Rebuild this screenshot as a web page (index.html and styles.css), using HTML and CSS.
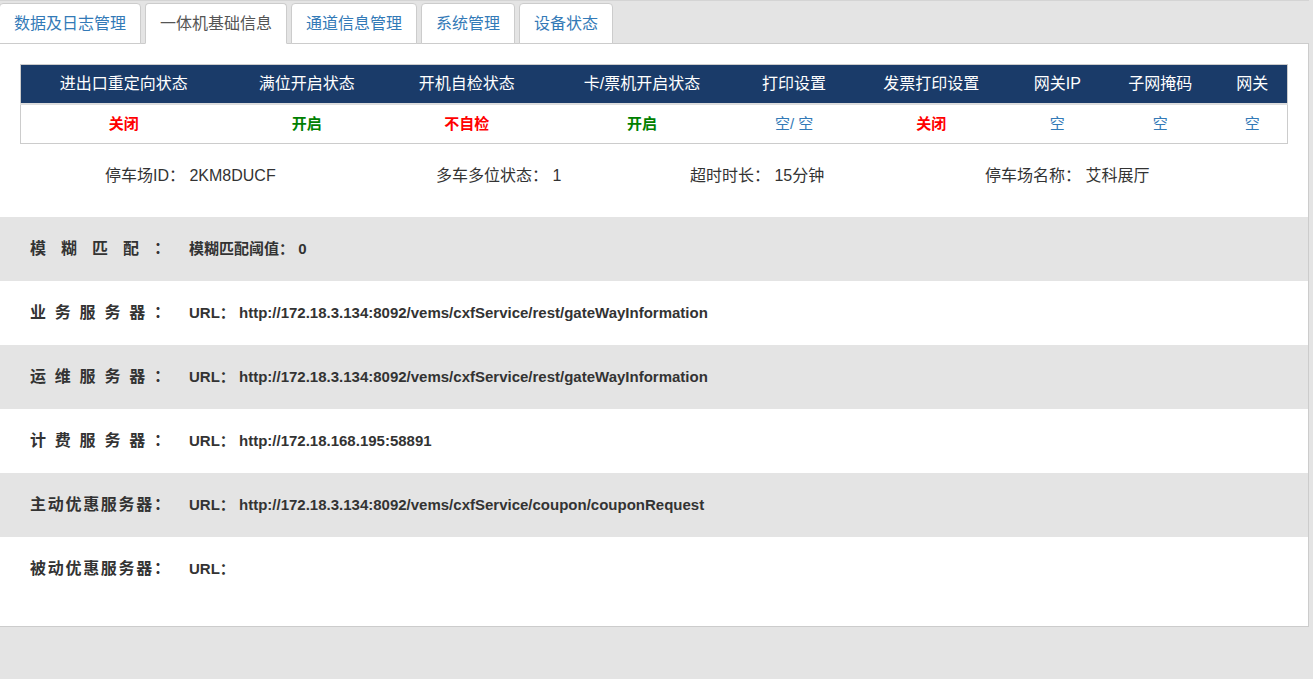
FILE: index.html
```html
<!DOCTYPE html>
<html lang="zh-CN">
<head>
<meta charset="utf-8">
<title>一体机基础信息</title>
<link rel="stylesheet" href="styles.css">
</head>
<body>
<div class="page">
  <ul class="tabs">
    <li class="tab">数据及日志管理</li>
    <li class="tab active">一体机基础信息</li>
    <li class="tab">通道信息管理</li>
    <li class="tab">系统管理</li>
    <li class="tab">设备状态</li>
  </ul>
  <div class="panel">
    <div class="table-wrap">
      <table class="status">
        <colgroup>
          <col class="c1"><col class="c2"><col class="c3"><col class="c4"><col class="c5"><col class="c6"><col class="c7"><col class="c8"><col class="c9">
        </colgroup>
        <thead>
          <tr>
            <th>进出口重定向状态</th>
            <th>满位开启状态</th>
            <th>开机自检状态</th>
            <th>卡/票机开启状态</th>
            <th>打印设置</th>
            <th>发票打印设置</th>
            <th>网关IP</th>
            <th>子网掩码</th>
            <th>网关</th>
          </tr>
        </thead>
        <tbody>
          <tr>
            <td class="red">关闭</td>
            <td class="green">开启</td>
            <td class="red">不自检</td>
            <td class="green">开启</td>
            <td class="blue">空/ 空</td>
            <td class="red">关闭</td>
            <td class="blue">空</td>
            <td class="blue">空</td>
            <td class="blue">空</td>
          </tr>
        </tbody>
      </table>
    </div>
    <div class="info">
      <span>停车场ID： 2KM8DUCF</span>
      <span>多车多位状态： 1</span>
      <span>超时时长： 15分钟</span>
      <span>停车场名称： 艾科展厅</span>
    </div>
    <div class="rows">
      <div class="row gray"><span class="label">模糊匹配：</span><span class="value">模糊匹配阈值： 0</span></div>
      <div class="row"><span class="label">业务服务器：</span><span class="value">URL： http://172.18.3.134:8092/vems/cxfService/rest/gateWayInformation</span></div>
      <div class="row gray"><span class="label">运维服务器：</span><span class="value">URL： http://172.18.3.134:8092/vems/cxfService/rest/gateWayInformation</span></div>
      <div class="row"><span class="label">计费服务器：</span><span class="value">URL： http://172.18.168.195:58891</span></div>
      <div class="row gray"><span class="label">主动优惠服务器：</span><span class="value">URL： http://172.18.3.134:8092/vems/cxfService/coupon/couponRequest</span></div>
      <div class="row"><span class="label">被动优惠服务器：</span><span class="value">URL：</span></div>
    </div>
  </div>
</div>
</body>
</html>
```
FILE: styles.css
```css
html, body {
  margin: 0;
  padding: 0;
  background: #e4e4e4;
}
body {
  font-family: "Liberation Sans", "Noto Sans CJK SC", sans-serif;
  color: #333;
  height: 679px;
  overflow: hidden;
}
.page {
  border-top: 1px solid #d4d4d4;
  width: 1309px;
}
.tabs {
  list-style: none;
  margin: 0 0 0 -1px;
  padding: 2px 0 0 0;
  display: flex;
  gap: 4px;
  position: relative;
  z-index: 1;
}
.tab {
  height: 39px;
  padding: 0 14px;
  display: flex;
  align-items: center;
  background: #fff;
  border: 1px solid #ccc;
  border-radius: 4px 4px 0 0;
  margin-bottom: -1px;
  font-size: 16px;
  line-height: 20px;
  color: #337ab7;
}
.tab.active {
  color: #555;
  border-bottom-color: #fff;
}
.panel {
  background: #fff;
  border-top: 1px solid #ccc;
  border-right: 1px solid #ccc;
  border-bottom: 1px solid #ccc;
  padding: 20px 0 25px 0;
}
.table-wrap {
  padding: 0 20px;
}
.status {
  width: 100%;
  border-collapse: collapse;
  table-layout: fixed;
  border: 1px solid #ccc;
}
.c1 { width: 206px; }
.c2 { width: 160px; }
.c3 { width: 160px; }
.c4 { width: 190px; }
.c5 { width: 114px; }
.c6 { width: 160px; }
.c7 { width: 92px; }
.c8 { width: 114px; }
.c9 { width: 70px; }
.status th {
  background: #1a3b69;
  color: #fff;
  font-weight: normal;
  font-size: 16px;
  line-height: 20px;
  height: 38px;
  padding: 0;
  text-align: center;
  border-bottom: 2px solid #ddd;
}
.status td {
  font-size: 15px;
  font-weight: bold;
  line-height: 20px;
  height: 38px;
  padding: 0;
  text-align: center;
}
.status td.red { color: #ff0000; }
.status td.green { color: #008000; }
.status td.blue { color: #337ab7; font-weight: normal; }
.info {
  display: grid;
  grid-template-columns: 331px 254px 295px auto;
  padding: 22px 0 31px 105px;
  font-size: 16px;
  line-height: 20px;
  color: #333;
}
.rows {
  display: flex;
  flex-direction: column;
}
.row {
  height: 64px;
  display: flex;
  align-items: center;
  padding-left: 30px;
  background: #fff;
}
.row.gray {
  background: #e4e4e4;
}
.label {
  width: 140px;
  margin-right: 19px;
  font-size: 16px;
  font-weight: bold;
  line-height: 20px;
  text-align: justify;
  text-align-last: justify;
  color: #333;
}
.value {
  font-size: 15px;
  font-weight: bold;
  line-height: 20px;
  color: #333;
}
```
